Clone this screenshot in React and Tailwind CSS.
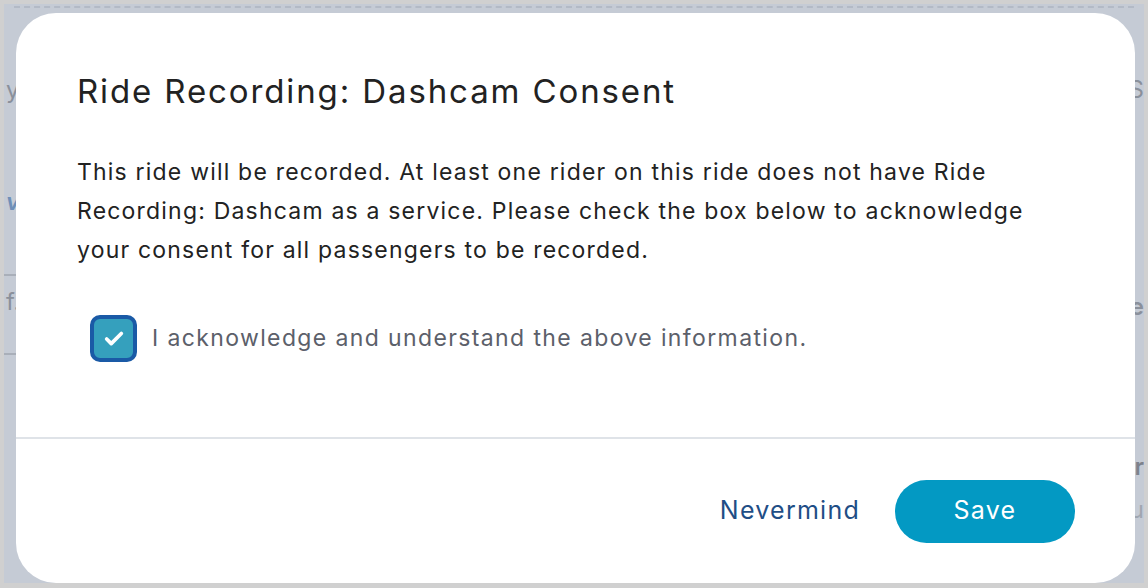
import { Check } from "lucide-react";

function Backdrop() {
  return (
    <div className="flex h-full w-full flex-col bg-[#c5cbd5] text-[#8a909b]">
      <div className="mx-[10px] mt-[2px] border-t-2 border-dashed border-[#b3bac6]" />
      <div className="flex flex-1">
        <div className="flex w-[40px] shrink-0 flex-col pt-[67px] text-[24px] leading-[30px]">
          <div className="pl-[2px]">y</div>
          <div className="mt-[82px] pl-[2px] font-semibold italic text-[#6f8fb8]">vi</div>
          <div className="mt-[57px] border-t-2 border-[#a9afb9]" />
          <div className="mt-[11px] pl-[2px]">f.</div>
          <div className="mt-[36px] border-t-2 border-[#a9afb9]" />
        </div>
        <div className="flex-1" />
        <div className="flex w-[40px] shrink-0 flex-col items-end pt-[67px] text-[24px] leading-[30px]">
          <div>S</div>
          <div className="mt-[187px] font-semibold">e</div>
          <div className="mt-[130px] font-semibold text-[#7d828c]">r</div>
          <div className="mt-[13px] text-[#a0a6b0]">u</div>
        </div>
      </div>
    </div>
  );
}

export default function App() {
  return (
    <div
      className="relative h-[588px] w-[1148px] overflow-hidden border-[4px] border-b-[5px] border-[#d0d0d0] bg-[#d0d0d0]"
      style={{ fontFamily: "Inter, 'Noto Sans', sans-serif" }}
    >
      <Backdrop />
      <div className="absolute left-[12px] top-[9px] flex h-[570px] w-[1119px] flex-col rounded-[40px] bg-white">
        <div className="flex flex-1 flex-col px-[61px] pt-[56px]">
          <h1 className="text-[33px] leading-[44px] tracking-[0.057em] text-[#222222]">
            Ride Recording: Dashcam Consent
          </h1>
          <p className="mt-[40px] max-w-[975px] text-[23px] leading-[39px] tracking-[0.052em] text-[#222222]">
            This ride will be recorded. At least one rider on this ride does not have Ride
            Recording: Dashcam as a service. Please check the box below to acknowledge
            your consent for all passengers to be recorded.
          </p>
          <label className="mt-[45px] flex items-center gap-[15px] pl-[13px]">
            <span className="flex h-[47px] w-[47px] items-center justify-center rounded-[10px] border-[4px] border-[#1a5aa6] bg-[#35a0bd]">
              <Check size={22} strokeWidth={4} className="text-white" />
            </span>
            <span className="text-[23px] tracking-[0.06em] text-[#5c606a]">
              I acknowledge and understand the above information.
            </span>
          </label>
        </div>
        <div className="flex h-[146px] items-center justify-end gap-[35px] border-t-2 border-[#dfe3e8] pr-[60px]">
          <button className="text-[25px] tracking-[0.05em] text-[#1f4e86]">Nevermind</button>
          <button className="h-[63px] w-[180px] rounded-full bg-[#0399c3] text-[25px] tracking-[0.05em] text-white">
            Save
          </button>
        </div>
      </div>
    </div>
  );
}
